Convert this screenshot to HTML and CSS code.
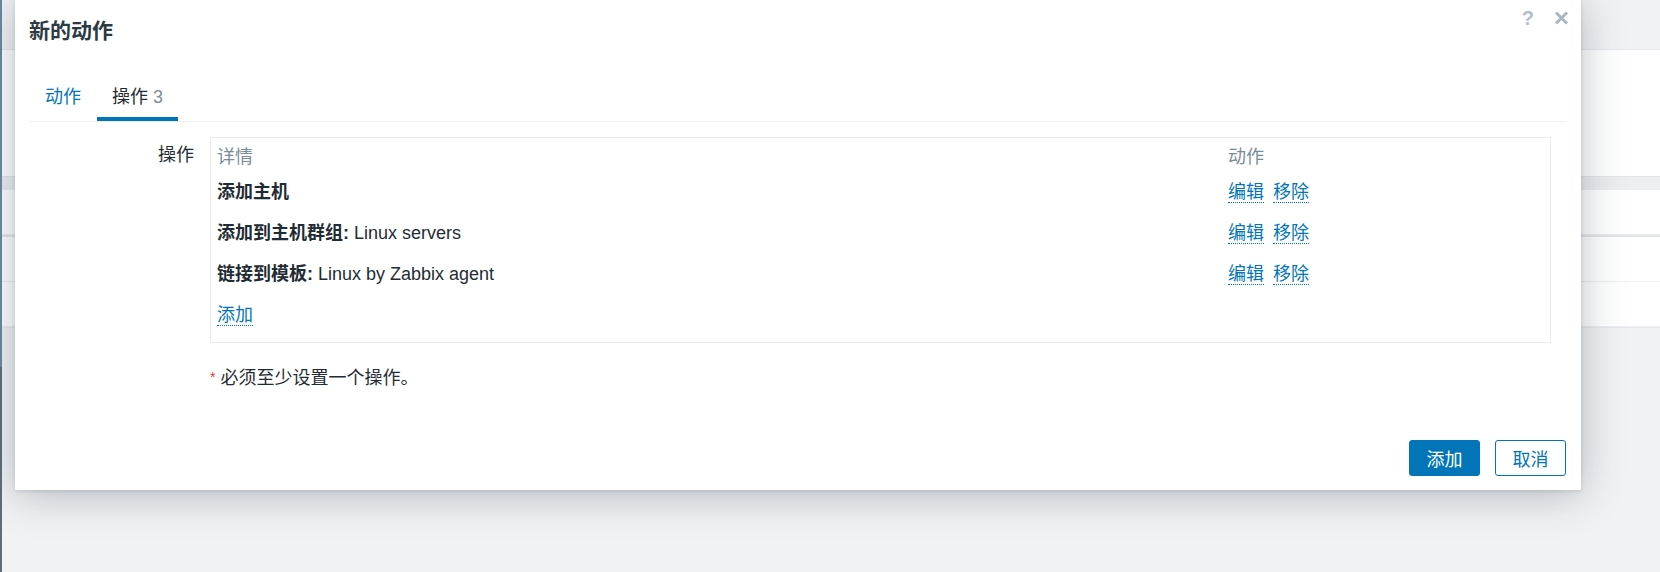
FILE: index.html
```html
<!DOCTYPE html>
<html lang="zh-CN">
<head>
    <meta charset="UTF-8">
    <title>新的动作</title>
    <link rel="stylesheet" href="styles.css">
</head>
<body>
    <div class="side"></div>
    <div class="page">
        <div class="card">
            <div class="card-top"></div>
            <div class="card-band"></div>
            <div class="card-row"></div>
            <div class="card-row thick"></div>
            <div class="card-row"></div>
        </div>
    </div>

    <div class="dlg">
        <div class="dlg-head">
            <h4>新的动作</h4>
            <div class="dlg-icons">
                <span class="ico-help">?</span>
                <svg class="ico-close" width="15" height="14" viewBox="0 0 15 14">
                    <path d="M2 1.5 L13 12.5 M13 1.5 L2 12.5" stroke="#a9b6be" stroke-width="3" fill="none"/>
                </svg>
            </div>
        </div>

        <div class="dlg-body">
            <ul class="tabs">
                <li class="tab">动作</li>
                <li class="tab active">操作 <span class="cnt">3</span></li>
            </ul>

            <div class="form-row">
                <label class="form-label">操作</label>
                <div class="form-field">
                    <div class="op-box">
                        <table class="op-table">
                            <thead>
                                <tr><th>详情</th><th class="col-act">动作</th></tr>
                            </thead>
                            <tbody>
                                <tr>
                                    <td><b>添加主机</b></td>
                                    <td class="col-act"><a class="lnk">编辑</a><a class="lnk">移除</a></td>
                                </tr>
                                <tr>
                                    <td><b>添加到主机群组:</b> Linux servers</td>
                                    <td class="col-act"><a class="lnk">编辑</a><a class="lnk">移除</a></td>
                                </tr>
                                <tr>
                                    <td><b>链接到模板:</b> Linux by Zabbix agent</td>
                                    <td class="col-act"><a class="lnk">编辑</a><a class="lnk">移除</a></td>
                                </tr>
                                <tr class="last">
                                    <td colspan="2"><a class="lnk">添加</a></td>
                                </tr>
                            </tbody>
                        </table>
                    </div>
                    <div class="note"><span class="req">*</span> 必须至少设置一个操作。</div>
                </div>
            </div>
        </div>

        <div class="dlg-foot">
            <button class="btn">添加</button>
            <button class="btn alt">取消</button>
        </div>
    </div>
</body>
</html>
```

FILE: styles.css
```css
html, body {
    margin: 0;
    height: 100%;
}

body {
    display: flex;
    background-color: #f1f2f4;
    font-family: "Liberation Sans", "Noto Sans CJK SC", sans-serif;
    font-size: 18px;
    color: #1f2c33;
    overflow: hidden;
}

/* page behind the dialog */
.side {
    width: 2px;
    flex: none;
    background: linear-gradient(to bottom, #6a89a3 0, #6a89a3 367px, #5f6d79 367px);
}

.page {
    flex: 1;
    padding-top: 49px;
}

.card {
    background-color: #ffffff;
    border-top: 1px solid #e6e9eb;
    border-bottom: 1px solid #e6e9eb;
}

.card-top {
    height: 126px;
}

.card-band {
    height: 13px;
    background-color: #eceef0;
    border-top: 1px solid #e3e6e8;
}

.card-row {
    height: 44px;
    border-bottom: 1px solid #eceef0;
}

.card-row.thick {
    border-top: 2px solid #e3e6e8;
}

/* dialog */
.dlg {
    position: absolute;
    left: 15px;
    top: 0;
    width: 1566px;
    height: 490px;
    background-color: #ffffff;
    display: flex;
    flex-direction: column;
    box-shadow: 0 4px 40px rgba(40, 60, 75, 0.32), 0 1px 4px rgba(40, 60, 75, 0.15);
}

.dlg-head {
    height: 62px;
    position: relative;
}

.dlg-head h4 {
    margin: 0;
    padding-left: 14px;
    line-height: 62px;
    font-size: 21px;
    font-weight: bold;
    color: #2b3a44;
}

.dlg-icons {
    position: absolute;
    top: 6px;
    right: 12px;
    display: flex;
    align-items: center;
    gap: 20px;
}

.ico-help {
    font-size: 20px;
    font-weight: bold;
    color: #b3bfc6;
    line-height: 24px;
}

.dlg-body {
    padding: 0 15px 0 15px;
}

.tabs {
    display: flex;
    gap: 1px;
    list-style: none;
    margin: 0;
    padding: 0;
    border-bottom: 1px solid #ebeef0;
}

.tab {
    padding: 23px 15px 8px;
    line-height: 24px;
    border-bottom: 4px solid transparent;
    color: #0275b8;
}

.tab.active {
    color: #1f2c33;
    border-bottom-color: #0275b8;
}

.cnt {
    color: #768d99;
}

.form-row {
    display: grid;
    grid-template-columns: 164px 1fr;
    gap: 16px;
    margin-top: 15px;
    padding-right: 15px;
}

.form-label {
    text-align: right;
    padding-top: 6px;
    line-height: 24px;
}

.op-box {
    border: 1px solid #e8eaec;
}

.op-table {
    width: 100%;
    border-collapse: collapse;
}

.op-table th {
    text-align: left;
    font-weight: normal;
    color: #768d99;
    line-height: 24px;
    padding: 7px 6px 1px;
}

.op-table td {
    line-height: 24px;
    padding: 10px 6px 7px;
    white-space: nowrap;
}

.op-table tr.last td {
    padding-bottom: 15px;
}

.op-table .col-act {
    width: 316px;
}

.lnk {
    color: #0275b8;
    border-bottom: 1px dotted #0275b8;
    cursor: pointer;
    margin-right: 9px;
}

.note {
    margin-top: 22px;
    line-height: 24px;
}

.req {
    color: #e33734;
    font-size: 14px;
    vertical-align: 2px;
}

.dlg-foot {
    margin-top: auto;
    display: flex;
    justify-content: flex-end;
    gap: 15px;
    padding: 0 15px 14px 0;
}

.btn {
    height: 36px;
    width: 71px;
    font-family: inherit;
    font-size: 18px;
    border: 1px solid #0275b8;
    border-radius: 3px;
    background-color: #0275b8;
    color: #ffffff;
    padding: 0;
}

.btn.alt {
    background-color: #ffffff;
    color: #0275b8;
}
```
